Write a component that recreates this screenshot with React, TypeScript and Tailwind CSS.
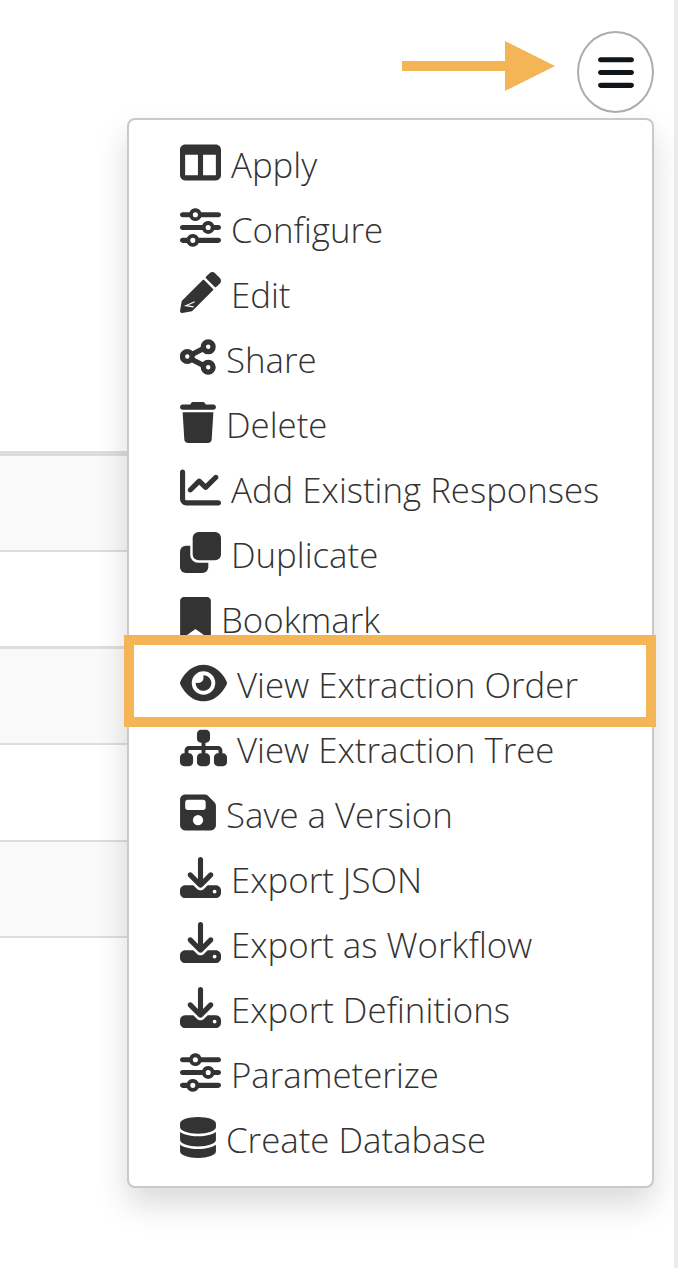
import React from 'react';
import {
  FaBars,
  FaBookmark,
  FaChartLine,
  FaDatabase,
  FaDownload,
  FaEye,
  FaFloppyDisk,
  FaSitemap,
  FaSliders,
  FaTableColumns,
  FaTrash,
} from 'react-icons/fa6';

type IconProps = { className?: string };

// These three differ from the stock icons, so they are drawn by hand
const PencilIcon: React.FC<IconProps> = ({ className }) => (
  <svg className={className} viewBox="0 0 512 512" fill="currentColor">
    <path d="M497.9 142.1l-46.1 46.1c-4.7 4.7-12.3 4.7-17 0l-111-111c-4.7-4.7-4.7-12.3 0-17l46.1-46.1c18.7-18.7 49.1-18.7 67.9 0l60.1 60.1c18.8 18.7 18.8 49.1 0 67.9z" />
    <path d="M284.2 99.8L21.6 362.4.4 483.9c-2.9 16.4 11.4 30.6 27.8 27.8l121.5-21.3 262.6-262.6c4.7-4.7 4.7-12.3 0-17l-111-111c-4.8-4.7-12.4-4.7-17.1 0z" />
    <path d="M183 372L73 420L170 436" fill="none" stroke="#ffffff" strokeWidth="14" />
  </svg>
);

const ShareIcon: React.FC<IconProps> = ({ className }) => (
  <svg className={className} viewBox="0 0 37 37" fill="none" stroke="currentColor" strokeWidth="5.5">
    <path d="M13 15L23 10M13 21L23 26" />
    <circle cx="7.5" cy="17.5" r="5" />
    <circle cx="29" cy="7.5" r="5" />
    <circle cx="29" cy="28.5" r="5" />
  </svg>
);

const CloneIcon: React.FC<IconProps> = ({ className }) => (
  <svg className={className} viewBox="0 0 42 42" fill="currentColor">
    <rect x="0" y="14" width="29" height="28" rx="6" />
    <rect x="10.5" y="-3" width="34" height="34.5" rx="8" fill="#ffffff" />
    <rect x="13" y="0" width="29" height="29" rx="6" />
  </svg>
);

interface MenuItem {
  label: string;
  icon: React.FC<IconProps>;
  size: string;
  highlighted?: boolean;
}

const menuItems: MenuItem[] = [
  { label: 'Apply', icon: FaTableColumns, size: 'h-[41px] w-[41px]' },
  { label: 'Configure', icon: FaSliders, size: 'h-[41px] w-[41px]' },
  { label: 'Edit', icon: PencilIcon, size: 'h-[41px] w-[41px]' },
  { label: 'Share', icon: ShareIcon, size: 'h-[41px] w-[36px]' },
  { label: 'Delete', icon: FaTrash, size: 'h-[41px] w-[36px]' },
  { label: 'Add Existing Responses', icon: FaChartLine, size: 'h-[41px] w-[41px]' },
  { label: 'Duplicate', icon: CloneIcon, size: 'h-[41px] w-[41px]' },
  { label: 'Bookmark', icon: FaBookmark, size: 'h-[41px] w-[31px]' },
  { label: 'View Extraction Order', icon: FaEye, size: 'h-[42px] w-[47px]', highlighted: true },
  { label: 'View Extraction Tree', icon: FaSitemap, size: 'h-[42px] w-[47px]' },
  { label: 'Save a Version', icon: FaFloppyDisk, size: 'h-[41px] w-[36px]' },
  { label: 'Export JSON', icon: FaDownload, size: 'h-[41px] w-[41px]' },
  { label: 'Export as Workflow', icon: FaDownload, size: 'h-[41px] w-[41px]' },
  { label: 'Export Definitions', icon: FaDownload, size: 'h-[41px] w-[41px]' },
  { label: 'Parameterize', icon: FaSliders, size: 'h-[41px] w-[41px]' },
  { label: 'Create Database', icon: FaDatabase, size: 'h-[41px] w-[36px]' },
];

const App: React.FC = () => {
  return (
    <div className="relative flex h-[1268px] w-[678px] overflow-hidden bg-white font-['Open_Sans',sans-serif]">
      <div className="w-[674px]">
        {/* Menu toggle */}
        <div className="flex justify-end pr-[20px] pt-[31px]">
          <button className="flex h-[82px] w-[77px] items-center justify-center rounded-[50%] border-2 border-[#adadad] text-[#10151a]">
            <FaBars className="h-[41px] w-[36px]" />
          </button>
        </div>

        {/* Table behind the menu */}
        <div className="mt-[338px] w-[654px] border-t-[5px] border-[#dddddd]">
          <div className="h-[96px] border-b-2 border-[#dddddd] bg-[#f9f9f9]" />
          <div className="h-[97px] border-b-[3px] border-[#dddddd]" />
          <div className="h-[96px] border-b-2 border-[#dddddd] bg-[#f9f9f9]" />
          <div className="h-[97px] border-b-2 border-[#dddddd]" />
          <div className="h-[96px] border-b-2 border-[#dddddd] bg-[#f9f9f9]" />
        </div>
      </div>
      <div className="w-[4px] bg-[#ececec]" />

      {/* Annotation arrow */}
      <svg className="absolute left-[402px] top-[41px]" width="153" height="50" viewBox="0 0 153 50">
        <path d="M0 20H103V0L153 25L103 50V30H0Z" fill="#f3b555" />
      </svg>

      {/* Dropdown menu */}
      <div className="absolute left-[127px] top-[118px] w-[527px] rounded-[8px] border-2 border-[#c9c9c9] bg-white py-[13px] shadow-[0_16px_32px_rgba(0,0,0,0.15)]">
        {menuItems.map(({ label, icon: Icon, size, highlighted }) => (
          <div
            key={label}
            className="relative flex h-[65px] items-center gap-[10px] pl-[51px] text-[34.8px] font-light whitespace-nowrap text-[#333333]"
          >
            <Icon className={`mb-[6px] shrink-0 text-[#333333] ${size}`} />
            <span>{label}</span>
            {highlighted && (
              <div className="absolute -left-[5px] -right-[4px] -top-[18px] h-[92px] border-[10px] border-[#f3b555]" />
            )}
          </div>
        ))}
      </div>
    </div>
  );
};

export default App;
